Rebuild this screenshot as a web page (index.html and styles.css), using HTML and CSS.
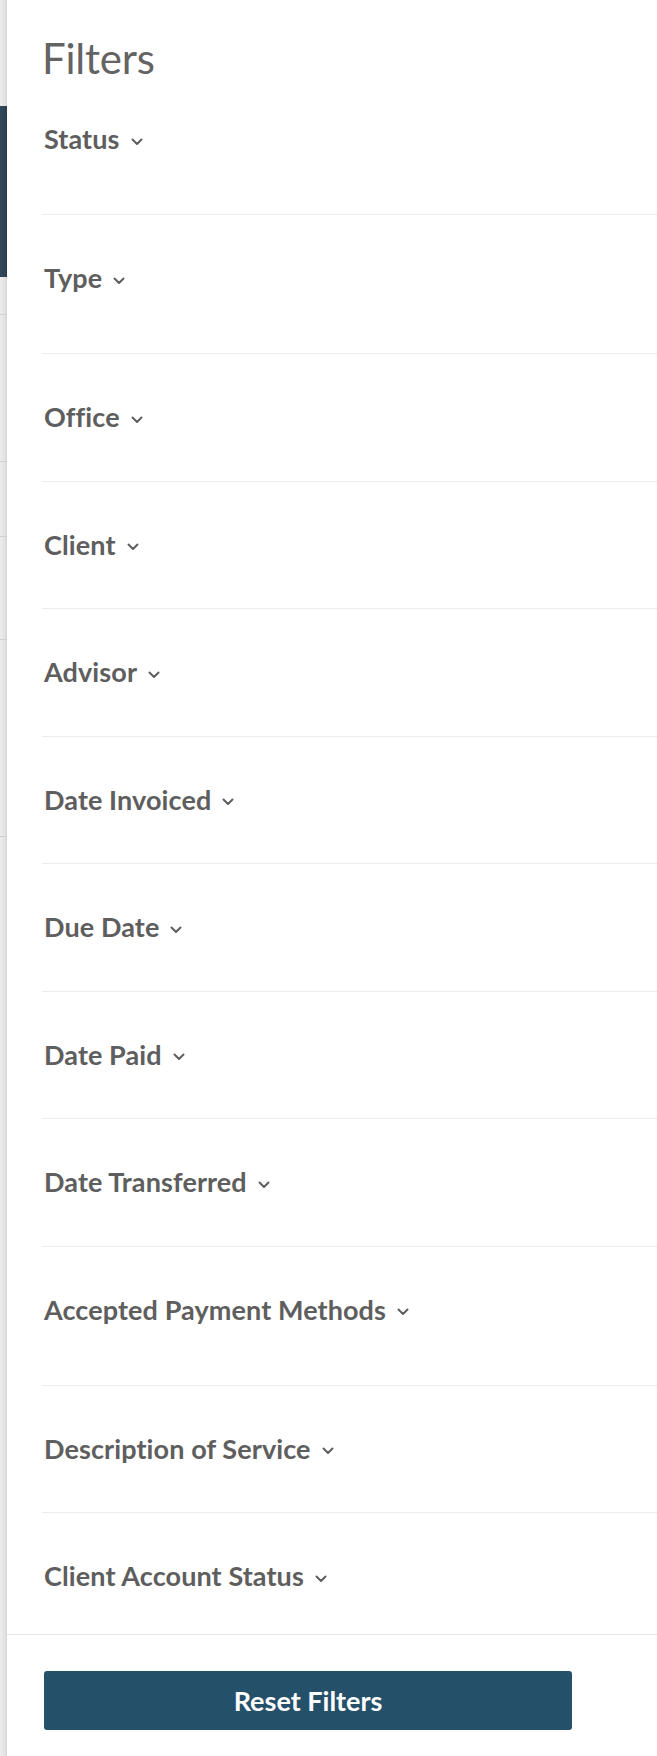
FILE: index.html
```html
<!DOCTYPE html>
<html lang="en">
<head>
<meta charset="utf-8">
<title>Filters</title>
<link rel="stylesheet" href="styles.css">
</head>
<body>
<div class="page">
  <div class="backdrop">
    <div class="bd-top"></div>
    <div class="bd-dark"></div>
    <div class="bd-seg bd-seg--1"></div>
    <div class="bd-seg bd-seg--2"></div>
    <div class="bd-seg bd-seg--3"></div>
    <div class="bd-seg bd-seg--4"></div>
    <div class="bd-seg bd-seg--5"></div>
    <div class="bd-rest"></div>
  </div>
  <aside class="drawer">
    <div class="drawer-body">
      <h1 class="title">Filters</h1>
      <ul class="filter-list">
        <li class="filter filter--tall"><span class="filter-toggle">Status<svg class="chev" viewBox="0 0 12 8"><path d="M1.5 1.5 L6 6 L10.5 1.5"/></svg></span></li>
        <li class="filter filter--tall"><span class="filter-toggle">Type<svg class="chev" viewBox="0 0 12 8"><path d="M1.5 1.5 L6 6 L10.5 1.5"/></svg></span></li>
        <li class="filter"><span class="filter-toggle">Office<svg class="chev" viewBox="0 0 12 8"><path d="M1.5 1.5 L6 6 L10.5 1.5"/></svg></span></li>
        <li class="filter"><span class="filter-toggle">Client<svg class="chev" viewBox="0 0 12 8"><path d="M1.5 1.5 L6 6 L10.5 1.5"/></svg></span></li>
        <li class="filter"><span class="filter-toggle">Advisor<svg class="chev" viewBox="0 0 12 8"><path d="M1.5 1.5 L6 6 L10.5 1.5"/></svg></span></li>
        <li class="filter"><span class="filter-toggle">Date Invoiced<svg class="chev" viewBox="0 0 12 8"><path d="M1.5 1.5 L6 6 L10.5 1.5"/></svg></span></li>
        <li class="filter"><span class="filter-toggle">Due Date<svg class="chev" viewBox="0 0 12 8"><path d="M1.5 1.5 L6 6 L10.5 1.5"/></svg></span></li>
        <li class="filter"><span class="filter-toggle">Date Paid<svg class="chev" viewBox="0 0 12 8"><path d="M1.5 1.5 L6 6 L10.5 1.5"/></svg></span></li>
        <li class="filter"><span class="filter-toggle">Date Transferred<svg class="chev" viewBox="0 0 12 8"><path d="M1.5 1.5 L6 6 L10.5 1.5"/></svg></span></li>
        <li class="filter filter--tall"><span class="filter-toggle">Accepted Payment Methods<svg class="chev" viewBox="0 0 12 8"><path d="M1.5 1.5 L6 6 L10.5 1.5"/></svg></span></li>
        <li class="filter"><span class="filter-toggle">Description of Service<svg class="chev" viewBox="0 0 12 8"><path d="M1.5 1.5 L6 6 L10.5 1.5"/></svg></span></li>
        <li class="filter filter--last"><span class="filter-toggle">Client Account Status<svg class="chev" viewBox="0 0 12 8"><path d="M1.5 1.5 L6 6 L10.5 1.5"/></svg></span></li>
      </ul>
    </div>
    <div class="drawer-footer">
      <button class="reset" type="button">Reset Filters</button>
    </div>
  </aside>
</div>
</body>
</html>
```

FILE: styles.css
```css
html, body {
  margin: 0;
  padding: 0;
  background: #ffffff;
}

body {
  font-family: "Lato", "Open Sans", "Liberation Sans", sans-serif;
  color: #5e5e5e;
}

.page {
  display: flex;
  width: 657px;
  min-height: 1756px;
  overflow: hidden;
}

/* page peeking behind the drawer */
.backdrop {
  flex: 0 0 7px;
  display: flex;
  flex-direction: column;
  background: linear-gradient(to right, #ececec 0%, #e4e4e4 60%, #d6d6d6 100%);
}

.bd-top { height: 106px; }
.bd-dark {
  height: 171px;
  background: linear-gradient(to right, #33475a 0%, #2f4255 70%, #283a4b 100%);
}
.bd-seg {
  border-bottom: 1px solid #d2d2d2;
}
.bd-seg--1 { height: 37px; }
.bd-seg--2 { height: 146px; }
.bd-seg--3 { height: 74px; }
.bd-seg--4 { height: 102px; }
.bd-seg--5 { height: 196px; }
.bd-rest { flex: 1; }

.drawer {
  flex: 1;
  display: flex;
  flex-direction: column;
  background: #ffffff;
}

.drawer-body {
  padding: 33px 0 0 35px;
}

.title {
  margin: 0 0 39px 0;
  font-size: 42px;
  font-weight: 400;
  line-height: 51px;
  color: #636363;
  letter-spacing: -0.2px;
}

.filter-list {
  list-style: none;
  margin: 0;
  padding: 0;
}

.filter {
  padding: 0 0 47.5px 2px;
  border-bottom: 1px solid #ececec;
}

.filter + .filter {
  padding-top: 47px;
}

.filter--tall {
  padding-bottom: 59px;
}

.filter--last {
  border-bottom: none;
  padding-bottom: 42px;
}

.filter-toggle {
  display: inline-flex;
  align-items: center;
  font-size: 27px;
  font-weight: 700;
  line-height: 32px;
  letter-spacing: 0.1px;
  color: #5e5e5e;
}

.chev {
  width: 12px;
  height: 8px;
  margin: 5px 0 0 11px;
  fill: none;
  stroke: #5e5e5e;
  stroke-width: 2;
  stroke-linecap: round;
  stroke-linejoin: round;
}

.drawer-footer {
  border-top: 1px solid #e6e6e6;
  padding: 36px 0 27px 37px;
}

.reset {
  display: block;
  width: 528px;
  height: 59px;
  border: none;
  border-radius: 3px;
  background: #25506a;
  color: #ffffff;
  font-family: "Lato", "Open Sans", "Liberation Sans", sans-serif;
  font-size: 27px;
  font-weight: 700;
  cursor: pointer;
}
```
